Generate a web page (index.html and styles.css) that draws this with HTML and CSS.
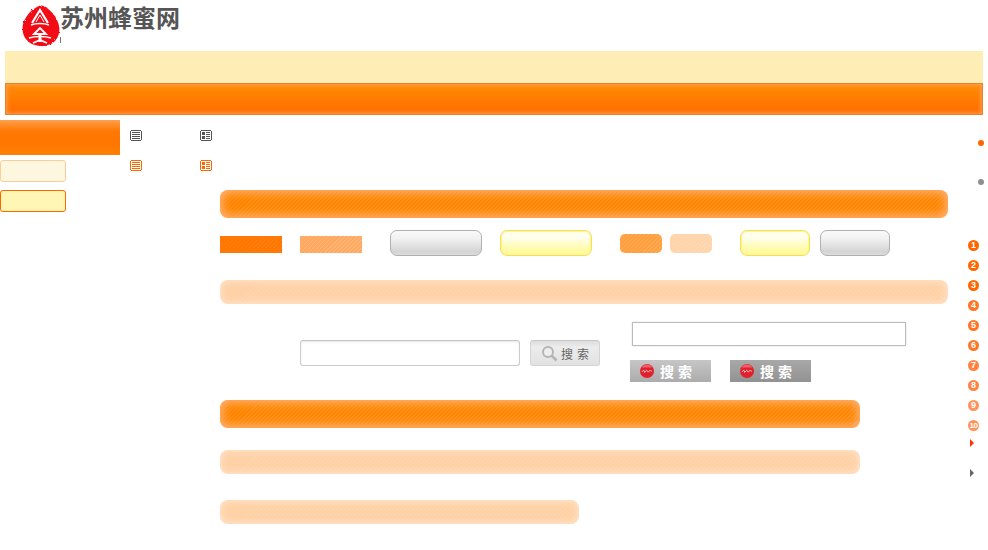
FILE: index.html
```html
<!DOCTYPE html>
<html lang="zh-CN">
<head>
    <meta charset="UTF-8">
    <meta name="viewport" content="width=device-width, initial-scale=1.0">
    <title>苏州蜂蜜网</title>
    <link rel="stylesheet" href="styles.css">
</head>
<body>
    <svg class="sprites" width="0" height="0">
        <defs>
            <symbol id="iconList" viewBox="0 0 12 11">
                <path d="M1 0h10v1h1v9h-1v1H1v-1H0V1h1zM1 1v9h10V1zM2 2h8v1H2zM2 4h8v1H2zM2 6h8v1H2zM2 8h8v1H2z" fill="currentColor" fill-rule="evenodd"/>
            </symbol>
            <symbol id="iconPics" viewBox="0 0 12 11">
                <path d="M1 0h10v1h1v9h-1v1H1v-1H0V1h1zM1 1v9h10V1zM2 2h3v3H2zM2 6h3v3H2zM6 2h4v1H6zM6 4h4v1H6zM6 6h4v1H6zM6 8h4v1H6z" fill="currentColor" fill-rule="evenodd"/>
            </symbol>
            <symbol id="coke" viewBox="0 0 14 14">
                <circle cx="7" cy="7" r="7" fill="#e0202c"/>
                <path d="M7 0.5a6.500 6.500 0 0 1 5.500 3H1.500A6.500 6.500 0 0 1 7 0.500z" fill="#f0606a"/>
                <path d="M2 8c1-2 2-2 2.500-1S4 9 5 8s1-2 2-1.500 0 1.500 1 1.500 1-1.500 2-1.500 1 1 2 .5" fill="none" stroke="#fff" stroke-width=".7"/>
            </symbol>
            <filter id="rough" x="-10%" y="-10%" width="120%" height="120%">
                <feTurbulence type="fractalNoise" baseFrequency=".7" numOctaves="2" seed="4"/>
                <feDisplacementMap in="SourceGraphic" scale="3"/>
            </filter>
        </defs>
    </svg>

    <header class="header">
        <svg class="logo" width="38" height="42" viewBox="0 0 38 42">
            <path d="M17 1c3-1 6 0 8 2 4 3 8 7 10 12 2 4 3 9 2 13-1 5-4 9-8 11-5 2-11 3-16 1-5-1-9-5-11-9-2-5-2-10 0-15 2-4 4-7 7-10 3-2 5-4 8-5z" fill="#f20c14" filter="url(#rough)"/>
            <g fill="none" stroke="#fff">
                <path d="M10 18L18 5l8 13" stroke-width="2.200"/>
                <path d="M14 17l4-7 4 7" stroke-width="1"/>
                <path d="M9 20c5-2 13-2 18 0" stroke-width="1.500"/>
                <path d="M12 29l6-6 6 6z" stroke-width="1.800"/>
                <path d="M7 33c6-2 16-2 22 0" stroke-width="1.500"/>
                <path d="M18 30v7" stroke-width="3"/>
                <path d="M11 38l7-3 7 3" stroke-width="1.800"/>
            </g>
        </svg>
        <div class="brand">
            <div class="brand-name">苏州蜂蜜网</div>
            <div class="brand-tick"></div>
        </div>
    </header>

    <div class="band-light"></div>
    <div class="band-orange"></div>

    <div class="layout">
        <aside class="side">
            <div class="side-head"></div>
            <div class="side-btn"></div>
            <div class="side-btn side-btn-on"></div>
        </aside>

        <main class="main">
            <div class="icons">
                <svg class="icon"><use href="#iconList"/></svg>
                <svg class="icon"><use href="#iconPics"/></svg>
                <svg class="icon icon-on"><use href="#iconList"/></svg>
                <svg class="icon icon-on"><use href="#iconPics"/></svg>
            </div>

            <div class="content">
                <div class="bar bar-strong"></div>

                <div class="samples">
                    <div class="tab tab-on"></div>
                    <div class="tab tab-off"></div>
                    <button class="pill pill-gray pill-wide"></button>
                    <button class="pill pill-yellow pill-wide"></button>
                    <div class="chip chip-on"></div>
                    <div class="chip chip-off"></div>
                    <button class="pill pill-yellow pill-narrow"></button>
                    <button class="pill pill-gray pill-narrow"></button>
                </div>

                <div class="bar bar-pale bar-second"></div>

                <div class="search-row">
                    <div class="search-one">
                        <input class="search-input" type="text">
                        <button class="search-btn">
                            <svg width="17" height="17" viewBox="0 0 17 17">
                                <circle cx="7" cy="7" r="5" fill="#eee" stroke="#b5b5b5" stroke-width="2"/>
                                <path d="M10.500 10.500l5 5" stroke="#b5b5b5" stroke-width="2.500"/>
                            </svg>
                            <span>搜索</span>
                        </button>
                    </div>
                    <div class="search-two">
                        <input class="box-input" type="text">
                        <div class="coke-row">
                            <button class="coke-btn">
                                <svg class="coke-mark"><use href="#coke"/></svg>搜索
                            </button>
                            <button class="coke-btn coke-btn-dark">
                                <svg class="coke-mark"><use href="#coke"/></svg>搜索
                            </button>
                        </div>
                    </div>
                </div>

                <div class="bar bar-strong bar-640 bar-third"></div>
                <div class="bar bar-pale bar-640 bar-fourth"></div>
                <div class="bar bar-pale bar-359 bar-fifth"></div>
            </div>
        </main>

        <aside class="rail">
            <div class="dot"></div>
            <div class="dot dot-gray"></div>
            <ol class="nums">
                <li>1</li>
                <li>2</li>
                <li>3</li>
                <li>4</li>
                <li>5</li>
                <li>6</li>
                <li>7</li>
                <li>8</li>
                <li>9</li>
                <li class="num-wide">10</li>
            </ol>
            <div class="arrow arrow-red"></div>
            <div class="arrow arrow-gray"></div>
        </aside>
    </div>
</body>
</html>
```

FILE: styles.css
```css
body {
    margin: 0;
    background: #fff;
    font-family: "Liberation Sans", "Noto Sans CJK SC", sans-serif;
    overflow: hidden;
}
button {
    padding: 0;
    cursor: pointer;
}
.sprites {
    display: block;
    height: 0;
}

/* header */
.header {
    display: flex;
    height: 51px;
    padding-left: 22px;
    box-sizing: border-box;
}
.logo {
    margin-top: 5px;
}
.brand-name {
    margin-top: 3px;
    font-family: "Noto Sans CJK SC", sans-serif;
    font-size: 24px;
    font-weight: 700;
    line-height: 28px;
    color: #555;
}
.brand-tick {
    width: 1px;
    height: 6px;
    margin-top: 6px;
    background: #777;
}
.band-light {
    height: 32px;
    margin: 0 5px;
    background: #feedb5;
}
.band-orange {
    height: 32px;
    margin: 0 5px;
    box-sizing: border-box;
    border: 1px solid #e9822f;
    background: linear-gradient(#ff8c0a, #ff8000 40%, #ff6a00);
    box-shadow: inset 0 0 4px 1px #ffa050;
}

.layout {
    display: flex;
    margin-top: 5px;
}

/* left side */
.side {
    width: 120px;
}
.side-head {
    height: 35px;
    background: linear-gradient(#ffa04c, #ff7a06 30%, #ff7500 60%, #ff8000);
}
.side-btn {
    width: 66px;
    height: 22px;
    margin-top: 5px;
    box-sizing: border-box;
    border: 1px solid #ffcc99;
    border-radius: 3px;
    background: #fdf7e0;
}
.side-btn-on {
    margin-top: 8px;
    border-color: #ff6600;
    background: #fff6b5;
}

/* middle */
.main {
    width: 840px;
}
.icons {
    display: grid;
    grid-template-columns: 70px 70px;
    grid-auto-rows: 30px;
    padding: 10px 0 0 10px;
}
.icon {
    display: block;
    width: 12px;
    height: 11px;
    color: #555;
    shape-rendering: crispEdges;
}
.icon-on {
    color: #ff6600;
}
.content {
    width: 728px;
    margin-left: 100px;
}

/* striped bars */
.bar {
    height: 28px;
    border-radius: 8px;
}
.bar-strong {
    background:
        repeating-linear-gradient(135deg, rgba(255,255,255,.08) 0 1.4px, transparent 1.4px 2.83px),
        #ff8500;
    box-shadow: inset 0 0 8px 3px #ffb070;
}
.bar-pale {
    height: 24px;
    background:
        repeating-linear-gradient(135deg, rgba(255,255,255,.1) 0 1.4px, transparent 1.4px 2.83px),
        #ffd0a4;
    box-shadow: inset 0 0 6px 2px #ffe2c8;
}
.bar-second {
    margin-top: 24px;
}
.bar-640 {
    width: 640px;
}
.bar-359 {
    width: 359px;
}
.bar-third {
    margin-top: 18px;
}
.bar-fourth {
    margin-top: 22px;
}
.bar-fifth {
    margin-top: 26px;
}

/* sample row */
.samples {
    display: flex;
    align-items: flex-start;
    height: 26px;
    margin-top: 12px;
}
.tab {
    width: 62px;
    height: 17px;
    margin-top: 6px;
}
.tab-on {
    background:
        repeating-linear-gradient(135deg, rgba(255,255,255,.05) 0 1.4px, transparent 1.4px 2.83px),
        #ff7600;
}
.tab-off {
    margin-left: 18px;
    background:
        repeating-linear-gradient(135deg, rgba(255,255,255,.14) 0 1.4px, transparent 1.4px 2.83px),
        #ffa860;
}
.pill {
    height: 26px;
    box-sizing: border-box;
    border-radius: 7px;
}
.pill-gray {
    border: 1px solid #b0b0b0;
    background: linear-gradient(#fafafa, #f2f2f2 30%, #d4d4d4 85%, #dcdcdc);
}
.pill-yellow {
    border: 1px solid #f8e04e;
    background: linear-gradient(#fffff0, #fffff0 25%, #fffa9c 85%, #fffbb0);
    box-shadow: inset 0 0 1px 1px #fdf29a;
}
.pill-wide {
    width: 92px;
    margin-left: 18px;
}
.tab-off + .pill-wide {
    margin-left: 28px;
}
.pill-narrow {
    width: 70px;
    margin-left: 10px;
}
.chip-off + .pill-narrow {
    margin-left: 28px;
}
.chip {
    width: 42px;
    height: 19px;
    margin-top: 4px;
    border-radius: 5px;
}
.chip-on {
    margin-left: 28px;
    background:
        repeating-linear-gradient(135deg, rgba(255,255,255,.1) 0 1.4px, transparent 1.4px 2.83px),
        #ffa040;
}
.chip-off {
    margin-left: 8px;
    background:
        repeating-linear-gradient(135deg, rgba(255,255,255,.12) 0 1.4px, transparent 1.4px 2.83px),
        #ffd4aa;
}

/* search */
.search-row {
    display: flex;
    height: 60px;
    margin-top: 18px;
    padding-left: 80px;
}
.search-one {
    display: flex;
    margin-top: 18px;
    height: 26px;
}
.search-input {
    width: 220px;
    height: 26px;
    box-sizing: border-box;
    padding: 0 6px;
    border: 1px solid #ccc;
    border-top-color: #c4c4c4;
    border-radius: 3px;
    box-shadow: inset 0 1px 2px #e8e8e8;
}
.search-btn {
    display: flex;
    align-items: center;
    width: 70px;
    height: 26px;
    margin-left: 10px;
    padding-left: 10px;
    box-sizing: border-box;
    border: 1px solid #d4d4d4;
    border-top-color: #c8c8c8;
    border-radius: 3px;
    background: linear-gradient(#dcdcdc, #ececec 25%, #e2e2e2);
    color: #666;
    font-family: "Noto Sans CJK SC", sans-serif;
    font-size: 12px;
    letter-spacing: 4px;
}
.search-btn span {
    margin-left: 3px;
    white-space: nowrap;
}
.search-two {
    margin-left: 30px;
}
.box-input {
    display: block;
    width: 274px;
    height: 24px;
    margin-left: 2px;
    box-sizing: border-box;
    padding: 0 6px;
    border: 1px solid #bbb;
    border-radius: 0;
    box-shadow: 0 0 2px #ddd;
}
.coke-row {
    display: flex;
    gap: 19px;
    margin-top: 14px;
}
.coke-btn {
    display: flex;
    align-items: center;
    width: 81px;
    height: 22px;
    padding-left: 10px;
    box-sizing: border-box;
    border: none;
    background: linear-gradient(#c6c6c6, #acacac);
    color: #fff;
    font-family: "Noto Sans CJK SC", sans-serif;
    font-size: 14px;
    font-weight: 700;
    letter-spacing: 4px;
    white-space: nowrap;
}
.coke-btn-dark {
    background: linear-gradient(#a8a8a8, #929292);
}
.coke-mark {
    width: 14px;
    height: 14px;
    margin-right: 6px;
}

/* right rail */
.rail {
    width: 28px;
}
.dot {
    width: 6px;
    height: 6px;
    margin: 20px 0 0 18px;
    border-radius: 50%;
    background: #ff6600;
}
.dot-gray {
    margin-top: 33px;
    background: #8f8f8f;
}
.nums {
    margin: 55px 0 0 8px;
    padding: 0;
    list-style: none;
}
.nums li {
    width: 11px;
    height: 11px;
    margin-bottom: 9px;
    border-radius: 50%;
    background: #ff6600;
    color: #fff;
    font-size: 9px;
    font-weight: 700;
    line-height: 11px;
    text-align: center;
}
.nums li:nth-child(n+4) {
    background: #ff7426;
}
.nums li:nth-child(n+7) {
    background: #ff8240;
}
.nums li:nth-child(n+9) {
    background: #ff925a;
}
.nums .num-wide {
    font-size: 8px;
    letter-spacing: -.5px;
}
.arrow {
    width: 0;
    height: 0;
    margin-left: 10px;
    border-style: solid;
    border-width: 4.5px 0 4.5px 4px;
    border-color: transparent;
}
.arrow-red {
    margin-top: -1px;
    border-left-color: #ff3300;
}
.arrow-gray {
    margin-top: 22px;
    border-left-color: #666;
}
```
